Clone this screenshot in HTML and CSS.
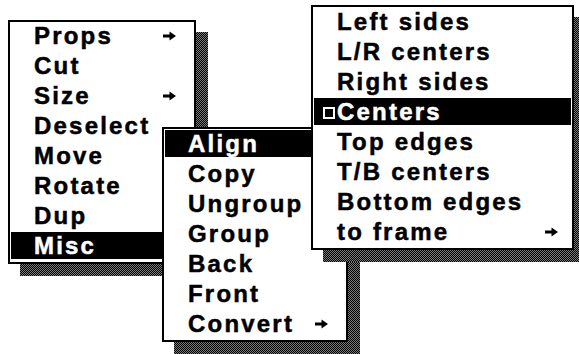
FILE: index.html
```html
<!DOCTYPE html>
<html>
<head>
<meta charset="utf-8">
<link rel="stylesheet" href="styles.css">
</head>
<body>
<div class="desk">
  <div class="popup p1">
    <div class="shadow"></div>
    <ul class="menu">
      <li class="item"><span class="gut"></span><span class="label">Props</span><svg class="arrow" viewBox="0 0 13 10"><path d="M0 3.5h6.5V0.5L13 5 6.5 9.5V6.5H0z"/></svg></li>
      <li class="item"><span class="gut"></span><span class="label">Cut</span></li>
      <li class="item"><span class="gut"></span><span class="label">Size</span><svg class="arrow" viewBox="0 0 13 10"><path d="M0 3.5h6.5V0.5L13 5 6.5 9.5V6.5H0z"/></svg></li>
      <li class="item"><span class="gut"></span><span class="label">Deselect</span></li>
      <li class="item"><span class="gut"></span><span class="label">Move</span></li>
      <li class="item"><span class="gut"></span><span class="label">Rotate</span></li>
      <li class="item"><span class="gut"></span><span class="label">Dup</span></li>
      <li class="item sel"><span class="gut"></span><span class="label">Misc</span></li>
    </ul>
  </div>
  <div class="popup p2">
    <div class="shadow"></div>
    <ul class="menu">
      <li class="item sel"><span class="gut"></span><span class="label">Align</span></li>
      <li class="item"><span class="gut"></span><span class="label">Copy</span></li>
      <li class="item"><span class="gut"></span><span class="label">Ungroup</span></li>
      <li class="item"><span class="gut"></span><span class="label">Group</span></li>
      <li class="item"><span class="gut"></span><span class="label">Back</span></li>
      <li class="item"><span class="gut"></span><span class="label">Front</span></li>
      <li class="item"><span class="gut"></span><span class="label">Convert</span><svg class="arrow" viewBox="0 0 13 10"><path d="M0 3.5h6.5V0.5L13 5 6.5 9.5V6.5H0z"/></svg></li>
    </ul>
  </div>
  <div class="popup p3">
    <div class="shadow"></div>
    <ul class="menu">
      <li class="item"><span class="gut"></span><span class="label">Left sides</span></li>
      <li class="item"><span class="gut"></span><span class="label">L/R centers</span></li>
      <li class="item"><span class="gut"></span><span class="label">Right sides</span></li>
      <li class="item sel"><span class="gut"><span class="mark"></span></span><span class="label">Centers</span></li>
      <li class="item"><span class="gut"></span><span class="label">Top edges</span></li>
      <li class="item"><span class="gut"></span><span class="label">T/B centers</span></li>
      <li class="item"><span class="gut"></span><span class="label">Bottom edges</span></li>
      <li class="item"><span class="gut"></span><span class="label">to frame</span><svg class="arrow" viewBox="0 0 13 10"><path d="M0 3.5h6.5V0.5L13 5 6.5 9.5V6.5H0z"/></svg></li>
    </ul>
  </div>
</div>
</body>
</html>
```
FILE: styles.css
```css
html, body {
  margin: 0;
  padding: 0;
  background: #fff;
}

.desk {
  position: relative;
  width: 579px;
  height: 354px;
  overflow: hidden;
  font-family: "Liberation Sans", Arial, sans-serif;
  font-weight: bold;
  font-size: 24px;
  letter-spacing: 2.2px;
  color: #000;
  -webkit-text-stroke: 0.5px currentColor;
}

.popup {
  position: absolute;
}

.p1 { left: 8px; top: 20px; width: 188px; height: 244px; }
.p2 { left: 162px; top: 127px; width: 186px; height: 215px; }
.p3 { left: 311px; top: 5px; width: 263px; height: 245px; }

.shadow {
  position: absolute;
  left: 12px;
  top: 12px;
  width: 100%;
  height: 100%;
  background: repeating-conic-gradient(#000 0 25%, #7a7a7a 0 50%) 0 0 / 2px 2px;
}

.menu {
  position: relative;
  box-sizing: border-box;
  height: 100%;
  margin: 0;
  padding: 1px 1px 0 1px;
  list-style: none;
  border: 2px solid #000;
  background: #fff;
  display: flex;
  flex-direction: column;
}

.p1 .menu { padding-top: 0; }

.item {
  display: flex;
  align-items: center;
  height: 27px;
  line-height: 27px;
  margin-bottom: 3px;
  white-space: nowrap;
}

.item.sel {
  background: #000;
  color: #fff;
}

.gut {
  flex: none;
  width: 23px;
  height: 27px;
  display: flex;
  align-items: center;
  box-sizing: border-box;
  padding-left: 9px;
}

.mark {
  display: block;
  box-sizing: border-box;
  width: 12px;
  height: 12px;
  border: 2px solid #fff;
  margin-top: 2px;
}

.arrow {
  flex: none;
  margin-left: auto;
  margin-right: 17px;
  width: 13px;
  height: 10px;
  fill: #000;
}

.p3 .arrow { margin-right: 13px; }
```
